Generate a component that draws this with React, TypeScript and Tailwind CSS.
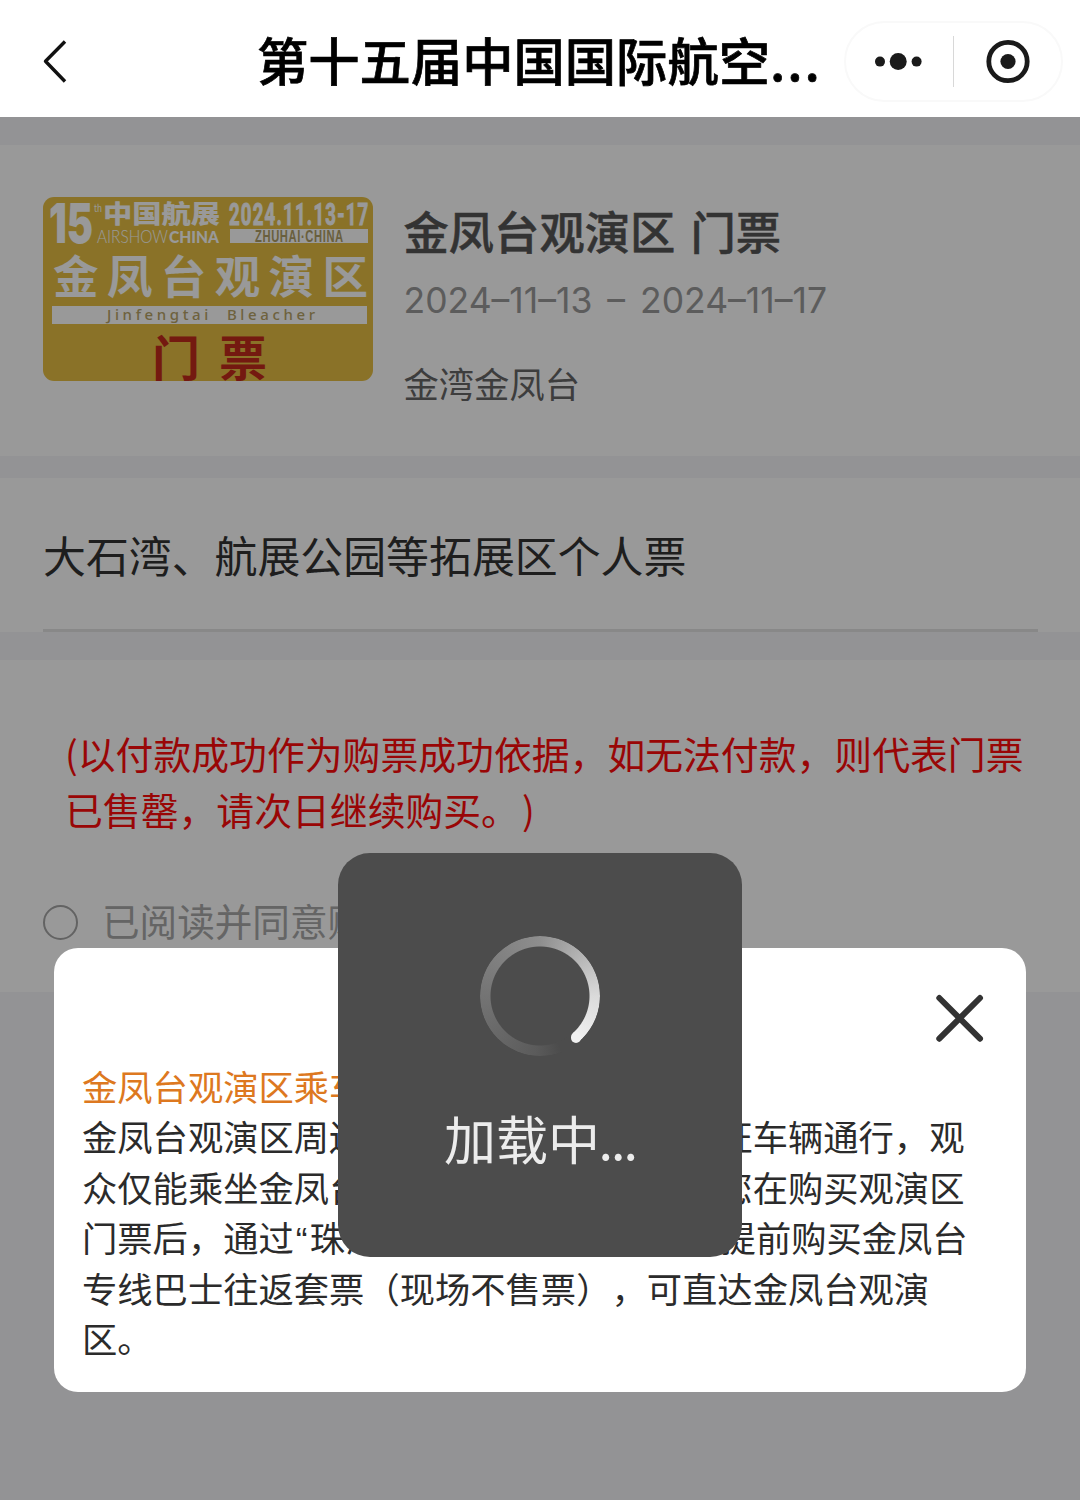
import React from "react";

const noticeLines = [
  "金凤台观演区周边实行交通管制，仅限持证车辆通行，观",
  "众仅能乘坐金凤台专线巴士前往观演区。您在购买观演区",
];

function NavBar() {
  return (
    <header className="flex h-[117px] items-center bg-white pl-[40px]">
      <svg width="30" height="48" viewBox="0 0 30 48" className="mt-[5px]" fill="none">
        <path d="M25 4.5 5.5 24.3 25 44.5" stroke="#111" strokeWidth="3.4" strokeLinejoin="round" />
      </svg>
      <h1 className="ml-[187px] w-[587px] whitespace-nowrap text-[51.3px] leading-[60px] font-medium text-black [-webkit-text-stroke:0.7px_#000]">
        第十五届中国国际航空<span className="tracking-[2px]">...</span>
      </h1>
      <div className="mt-[6px] flex h-[81px] w-[219px] items-center rounded-full border-2 border-[#f9f9f9]">
        <svg width="107" height="40" viewBox="0 0 107 40" fill="#1a1a1a">
          <circle cx="34" cy="19.6" r="5" />
          <circle cx="52.2" cy="19.6" r="8.5" />
          <circle cx="70.6" cy="19.6" r="5" />
        </svg>
        <div className="h-[51px] w-px bg-[#d8d8d8]" />
        <svg width="107" height="50" viewBox="0 0 107 50" fill="none">
          <circle cx="54" cy="24.5" r="19.2" stroke="#1a1a1a" strokeWidth="4.8" />
          <circle cx="54" cy="24.5" r="7.6" fill="#1a1a1a" />
        </svg>
      </div>
    </header>
  );
}

// Poster artwork of the ticket
function TicketPoster() {
  return (
    <svg
      width="330"
      height="184"
      viewBox="0 0 330 184"
      className="shrink-0 rounded-[11px]"
      fontFamily="'Noto Sans CJK SC', sans-serif"
    >
      <rect width="330" height="184" fill="#e6bf44" />
      <g fill="#fff" fontWeight="700">
        <text x="6" y="46" fontFamily="Inter, sans-serif" fontWeight="900" fontSize="55" textLength="44" lengthAdjust="spacingAndGlyphs">15</text>
        <text x="51" y="15" fontSize="10" fontWeight="400" textLength="8" lengthAdjust="spacingAndGlyphs">th</text>
        <text x="60" y="26" fontSize="25" fontWeight="900" textLength="117" lengthAdjust="spacingAndGlyphs">中国航展</text>
        <text x="54" y="46" fontFamily="Lato, sans-serif" fontWeight="300" fontSize="17" textLength="71" lengthAdjust="spacingAndGlyphs">AIRSHOW</text>
        <text x="126" y="46" fontFamily="Lato, sans-serif" fontWeight="900" fontSize="17" textLength="50" lengthAdjust="spacingAndGlyphs">CHINA</text>
        <text transform="translate(186 28) scale(.6 1)" fontFamily="Roboto, sans-serif" fontSize="31" textLength="232" lengthAdjust="spacing" stroke="#fff" strokeWidth="1">2024.11.13-17</text>
        <rect x="187" y="32" width="138" height="14" />
        <text x="10" y="97" fontSize="45.5" textLength="315" lengthAdjust="spacing">金凤台观演区</text>
        <rect x="9" y="109" width="315" height="18" />
      </g>
      <text transform="translate(212 45) scale(.7 1)" fontFamily="'Liberation Sans', sans-serif" fontWeight="700" fontSize="16" fill="#b09f68" textLength="126" lengthAdjust="spacing">ZHUHAI·CHINA</text>
      <text x="64" y="123" fontFamily="'Noto Sans', sans-serif" fontSize="15" fontWeight="500" fill="#b8a468" textLength="208" lengthAdjust="spacing" xmlSpace="preserve">Jinfengtai  Bleacher</text>
      <g fill="#c22a1b" fontSize="48" fontWeight="700">
        <text x="109" y="179">门</text>
        <text x="176" y="179">票</text>
      </g>
    </svg>
  );
}

function Notice() {
  return (
    <div className="absolute left-[54px] top-[948px] h-[444px] w-[972px] rounded-[24px] bg-white pl-[28px] pt-[113px]">
      <button className="absolute right-[38px] top-[42px]" aria-label="关闭">
        <svg width="56" height="56" viewBox="0 0 56 56" fill="none">
          <path d="M7.3 8 48 48.7M48 8 7.3 48.7" stroke="#333" strokeWidth="6" strokeLinecap="round" />
        </svg>
      </button>
      <div className="whitespace-nowrap text-[35.3px] leading-[50.4px] text-[#2b2b2b]">
        <p className="text-[#dd7820]">金凤台观演区乘车须知</p>
        {noticeLines.map((line) => (
          <p key={line}>{line}</p>
        ))}
        <p className="h-[50.4px]">
          门票后，通过
          <span className="inline-block w-[16px] pl-[2px] font-['Liberation_Sans']">“</span>
          珠海公交巴士
          <span className="inline-block w-[22.5px] font-['Liberation_Sans']">”</span>
          小程序请您提前购买金凤台
        </p>
        <p>专线巴士往返套票（现场不售票），可直达金凤台观演</p>
        <p>区。</p>
      </div>
    </div>
  );
}

function LoadingToast() {
  return (
    <div className="absolute left-[338px] top-[853px] flex h-[404px] w-[404px] flex-col items-center rounded-[32px] bg-[#4c4c4c] pt-[83px]">
      <div className="relative h-[120px] w-[120px]">
        <div className="h-full w-full rounded-full bg-[conic-gradient(from_139deg,#4c4c4c_0deg,#4c4c4c_20deg,#5b5b5b_45deg,#747474_131deg,#8e8e8e_221deg,#dadada_311deg,#f0f0f0_360deg)] [mask:radial-gradient(circle,transparent_49px,#000_50px)]" />
        <div className="absolute left-[90.5px] top-[96px] h-[10.5px] w-[10.5px] rounded-full bg-[#f0f0f0]" />
      </div>
      <p className="mt-[52px] text-[52px] leading-[60px] text-[#ececec]">
        加载中<span className="-ml-[1.5px] tracking-[-2px]">...</span>
      </p>
    </div>
  );
}

export default function App() {
  return (
    <div className="relative h-[1500px] w-[1080px] overflow-hidden bg-white font-['Noto_Sans_CJK_SC',sans-serif] [text-spacing-trim:space-all]">
      <NavBar />

      <main className="relative h-[1383px] bg-[#f5f5f8] pt-[28px]">
        <section className="flex h-[311px] bg-white pl-[43px] pt-[52px]">
          <TicketPoster />
          <div className="ml-[30.5px] whitespace-nowrap">
            <h2 className="mt-[10px] text-[45.3px] leading-[46px] font-medium text-[#555] [-webkit-text-stroke:0.5px_#555] [word-spacing:5px]">
              金凤台观演区 门票
            </h2>
            <p className="mt-[26px] font-[Inter] text-[35.5px] leading-[44px] text-[#999] [word-spacing:5px]">
              2024–11–13 – 2024–11–17
            </p>
            <p className="mt-[42px] text-[35.3px] leading-[36px] text-[#666]">金湾金凤台</p>
          </div>
        </section>

        <section className="mt-[22px] h-[154px] bg-white pl-[43px] pt-[46px]">
          <p className="text-[42.9px] leading-[60px] text-[#333]">大石湾、航展公园等拓展区个人票</p>
          <div className="mt-[45px] h-[3px] w-[995px] bg-[#e3e3e3]" />
        </section>

        <section className="mt-[28px] h-[332px] bg-white pt-[65px]">
          <p className="whitespace-nowrap pl-[65px] text-[37.85px] leading-[56px] text-[#ff0a0a]">
            (以付款成功作为购票成功依据，如无法付款，则代表门票
            <br />
            已售罄，请次日继续购买。<span className="ml-[3px]">)</span>
          </p>
          <div className="mt-[63px] flex h-[40px] items-center pl-[43px]">
            <span className="mt-[4px] h-[35px] w-[35px] rounded-full border-2 border-[#a5a5a5]" />
            <span className="ml-[24px] text-[37.6px] leading-[40px] text-[#a8a8a8]">已阅读并同意购票须知</span>
          </div>
        </section>

        <div className="absolute inset-0 bg-black/40" />
      </main>

      <Notice />
      <LoadingToast />
    </div>
  );
}
